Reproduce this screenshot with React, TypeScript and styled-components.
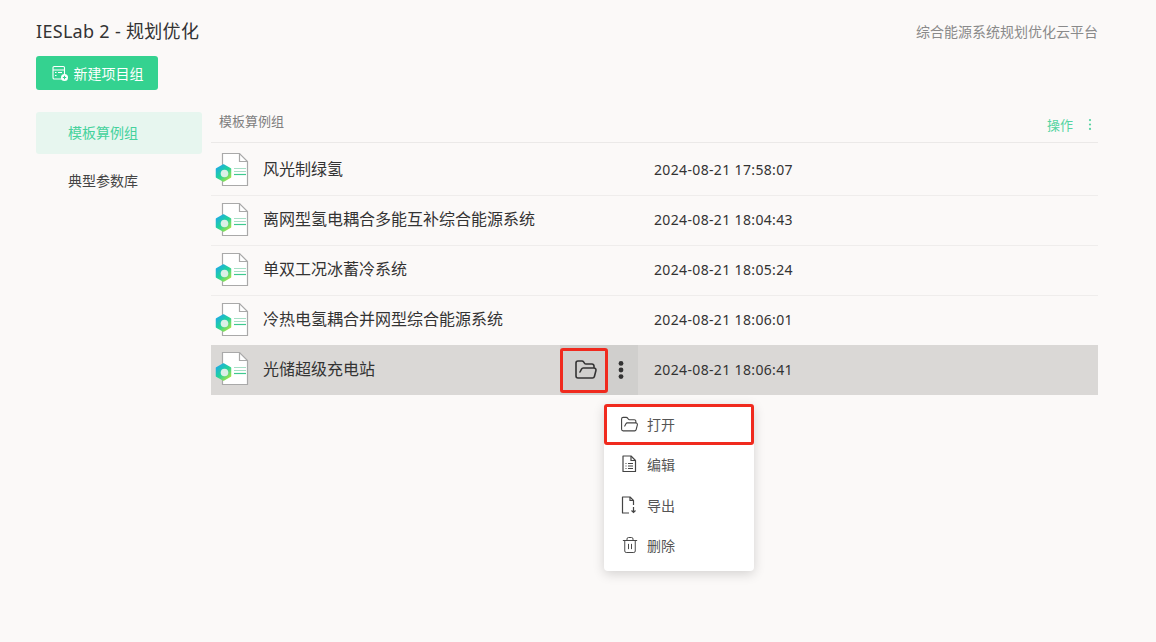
import React from "react";
import styled, { createGlobalStyle } from "styled-components";
import { FolderOpen, Trash2 } from "lucide-react";

const Global = createGlobalStyle`
  html, body { margin: 0; padding: 0; background: #fbf9f8; }
  body { font-family: "Noto Sans CJK SC", "Noto Sans", sans-serif; color: #333; }
  #root { min-height: 642px; }
`;

const Page = styled.div`
  position: relative;
  box-sizing: border-box;
  width: 1156px;
  height: 642px;
  padding: 18px 58px 0 36px;
  overflow: hidden;
  background: #fbf9f8;
`;
const Header = styled.header`
  display: flex;
  justify-content: space-between;
  align-items: center;
  height: 26px;
`;
const Title = styled.h1`
  margin: 0;
  font-size: 18px;
  font-weight: 400;
  line-height: 26px;
  color: #333;
  font-family: "Noto Sans", "Noto Sans CJK SC", sans-serif;
  letter-spacing: 0.3px;
`;
const Subtitle = styled.span`
  font-size: 14px;
  color: #8a8a8a;
`;
const NewButton = styled.button`
  display: flex;
  align-items: center;
  justify-content: center;
  gap: 6px;
  margin-top: 12px;
  width: 122px;
  height: 34px;
  padding: 0 0 0 1px;
  border: 0;
  border-radius: 3px;
  background: #34d290;
  color: #fff;
  font: inherit;
  font-size: 14px;
`;
const Body = styled.div`
  display: flex;
  margin-top: 22px;
  gap: 9px;
`;
const Side = styled.nav`
  width: 166px;
  display: flex;
  flex-direction: column;
  gap: 6px;
`;
const SideItem = styled.div<{ $active?: boolean }>`
  height: 42px;
  display: flex;
  align-items: center;
  padding: 0 0 2px 32px;
  box-sizing: border-box;
  border-radius: 3px;
  font-size: 14px;
  color: ${(p) => (p.$active ? "#45d29c" : "#444")};
  background: ${(p) => (p.$active ? "#e7f6ef" : "transparent")};
`;
const Main = styled.main`
  flex: 1;
`;
const ListHead = styled.div`
  display: flex;
  justify-content: space-between;
  align-items: center;
  box-sizing: border-box;
  height: 31px;
  padding-left: 8px;
  border-bottom: 1px solid #ebe9e8;
  margin-bottom: 3px;
`;
const HeadLabel = styled.span`
  font-size: 13px;
  color: #7f7f7f;
  margin-top: -13px;
`;
const HeadAction = styled.span`
  display: flex;
  align-items: center;
  gap: 13px;
  font-size: 13px;
  color: #55d4a2;
  padding-right: 4px;
  margin-top: -6px;
`;
const Row = styled.div<{ $hover?: boolean }>`
  display: flex;
  align-items: center;
  box-sizing: border-box;
  height: 50px;
  margin-top: ${(p) => (p.$hover ? "-1px" : "0")};
  padding-left: 4px;
  border-bottom: ${(p) => (p.$hover ? "0" : "1px solid #efedec")};
  background: ${(p) => (p.$hover ? "#dad8d6" : "transparent")};
`;
const RowIcon = styled.svg`
  flex: none;
  margin-top: -2px;
`;
const Name = styled.span<{ $hover?: boolean }>`
  margin-left: 12px;
  width: ${(p) => (p.$hover ? "297px" : "391px")};
  padding-bottom: ${(p) => (p.$hover ? "4px" : "6px")};
  font-size: 16px;
  color: #333;
  white-space: nowrap;
`;
const Actions = styled.div`
  width: 78px;
  height: 100%;
  margin-right: 16px;
  background: #d0cfcd;
  display: flex;
  align-items: center;
  gap: 9px;
  color: #333;
`;
const FolderButton = styled.div`
  box-sizing: border-box;
  width: 48px;
  height: 45px;
  padding-left: 4px;
  border: 3px solid #f02a1e;
  border-radius: 3px;
  display: flex;
  align-items: center;
  justify-content: center;
`;
const Time = styled.span`
  font-size: 14px;
  color: #333;
  padding-bottom: 2px;
  font-family: "Noto Sans", sans-serif;
  letter-spacing: 0.35px;
`;
const Menu = styled.div`
  position: absolute;
  left: 604px;
  top: 404px;
  width: 150px;
  height: 167px;
  background: #fff;
  border-radius: 4px;
  box-shadow: 0 3px 12px rgba(0, 0, 0, 0.16);
  display: flex;
  flex-direction: column;
`;
const MenuRow = styled.div<{ $marked?: boolean }>`
  box-sizing: border-box;
  height: 40.5px;
  display: flex;
  align-items: center;
  gap: ${(p) => (p.$marked ? "8px" : "10px")};
  padding: 0 0 ${(p) => (p.$marked ? "0" : "1px")} ${(p) => (p.$marked ? "13px" : "17px")};
  font-size: 14px;
  color: #555;
  ${(p) => p.$marked && "border: 3px solid #f02a1e; border-radius: 3px; background: #fff;"}
`;
const TrashIcon = styled(Trash2)`
  margin-right: -2px;
`;

const FileIcon = () => (
  <RowIcon width="36" height="36" viewBox="0 0 36 36" fill="none">
    <defs>
      <linearGradient id="hx" x1="0.1" y1="0" x2="0.9" y2="1">
        <stop offset="0" stopColor="#1fa8ea" />
        <stop offset="0.5" stopColor="#1fd39c" />
        <stop offset="1" stopColor="#b9e43a" />
      </linearGradient>
    </defs>
    <path d="M7.5 1.5H24.5L32.5 9.5V33.5H7.5Z" fill="#fff" stroke="#a9a9a9" strokeWidth="1.2" />
    <path d="M24.5 1.5V9.5H32.5" stroke="#a9a9a9" strokeWidth="1.2" />
    <path d="M19 16.5H31M19 19.5H31" stroke="#a6dfc6" strokeWidth="1" />
    <path d="M19 22.5H31" stroke="#3ec98f" strokeWidth="1.2" />
    <path d="M8.5 13L15.5 17V25L8.5 29L1.5 25V17Z" fill="url(#hx)" stroke="url(#hx)" strokeWidth="1.5" strokeLinejoin="round" />
    <circle cx="9.5" cy="21.5" r="3.8" fill="#dcefe6" />
  </RowIcon>
);
const PlusIcon = () => (
  <svg width="16" height="16" viewBox="0 0 16 16" fill="none" stroke="#fff" strokeWidth="1.1">
    <rect x="1" y="1.5" width="11.5" height="12.5" rx="1.2" />
    <path d="M1 5H12.5M3 7.5H4.5M6 7.5H10M3 10.5H4.5" />
    <circle cx="12.5" cy="12.5" r="3.5" fill="#fff" stroke="none" />
    <path d="M10.8 12.5H14.2M12.5 10.8V14.2" stroke="#34d290" />
  </svg>
);
const Dots = ({ size = 2.4, color = "#333", height = 18 }: { size?: number; color?: string; height?: number }) => (
  <svg width="8" height={height} viewBox={`0 0 8 ${height}`} fill={color}>
    <circle cx="4" cy={size} r={size} />
    <circle cx="4" cy={height / 2} r={size} />
    <circle cx="4" cy={height - size} r={size} />
  </svg>
);
const DocIcon = () => (
  <svg width="16" height="18" viewBox="0 0 16 18" fill="none" stroke="#444" strokeWidth="1.2">
    <path d="M2 1H10L14.5 5.5V16.5H2Z" strokeLinejoin="round" />
    <path d="M10 1V5.5H14.5M4.5 8.5H5.5M7 8.5H12M4.5 11H5.5M7 11H12M4.5 13.5H5.5M7 13.5H12" />
  </svg>
);
const ExportIcon = () => (
  <svg width="16" height="18" viewBox="0 0 16 18" fill="none" stroke="#444" strokeWidth="1.2">
    <path d="M8 17H1.5V1H9L12.5 4.5V9" strokeLinejoin="round" />
    <path d="M9 1V4.5H12.5M12.5 11V16.5M10.5 14.5L12.5 16.5L14.5 14.5" />
  </svg>
);

const rows = [
  ["风光制绿氢", "2024-08-21 17:58:07"],
  ["离网型氢电耦合多能互补综合能源系统", "2024-08-21 18:04:43"],
  ["单双工况冰蓄冷系统", "2024-08-21 18:05:24"],
  ["冷热电氢耦合并网型综合能源系统", "2024-08-21 18:06:01"],
];

export default function App() {
  return (
    <Page>
      <Global />
      <Header>
        <Title>IESLab 2 - 规划优化</Title>
        <Subtitle>综合能源系统规划优化云平台</Subtitle>
      </Header>
      <NewButton>
        <PlusIcon />
        新建项目组
      </NewButton>
      <Body>
        <Side>
          <SideItem $active>模板算例组</SideItem>
          <SideItem>典型参数库</SideItem>
        </Side>
        <Main>
          <ListHead>
            <HeadLabel>模板算例组</HeadLabel>
            <HeadAction>
              操作
              <Dots size={1.1} color="#55d4a2" height={11} />
            </HeadAction>
          </ListHead>
          {rows.map(([name, time]) => (
            <Row key={name}>
              <FileIcon />
              <Name>{name}</Name>
              <Time>{time}</Time>
            </Row>
          ))}
          <Row $hover>
            <FileIcon />
            <Name $hover>光储超级充电站</Name>
            <Actions>
              <FolderButton>
                <FolderOpen size={24} strokeWidth={1.6} />
              </FolderButton>
              <Dots />
            </Actions>
            <Time>2024-08-21 18:06:41</Time>
          </Row>
        </Main>
      </Body>
      <Menu>
        <MenuRow $marked>
          <FolderOpen size={19} strokeWidth={1.4} color="#444" />
          打开
        </MenuRow>
        <MenuRow>
          <DocIcon />
          编辑
        </MenuRow>
        <MenuRow>
          <ExportIcon />
          导出
        </MenuRow>
        <MenuRow>
          <TrashIcon size={18} strokeWidth={1.3} color="#444" />
          删除
        </MenuRow>
      </Menu>
    </Page>
  );
}
